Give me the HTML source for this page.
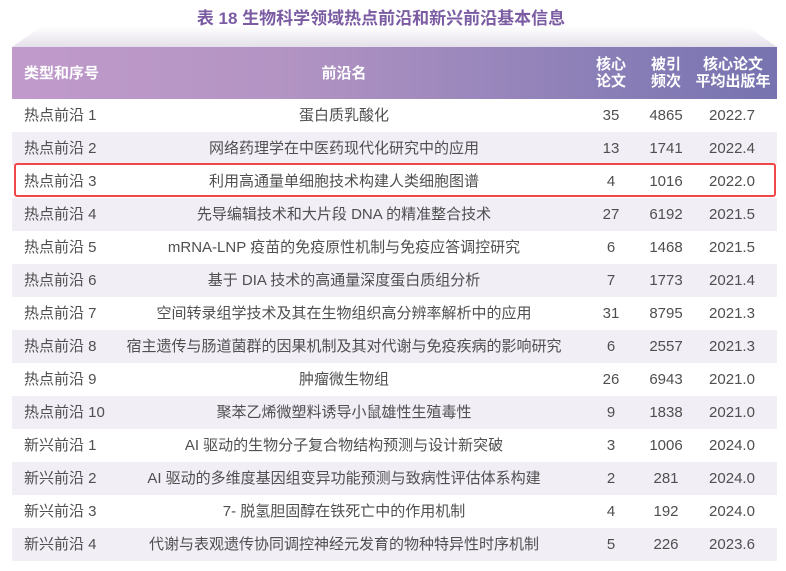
<!DOCTYPE html>
<html><head><meta charset="utf-8"><style>
*{margin:0;padding:0;box-sizing:border-box}
body{width:786px;height:571px;background:#fff;font-family:"Liberation Sans","Noto Sans CJK SC",sans-serif;position:relative;overflow:hidden;color:#4f4f4f}
.title{position:absolute;top:4px;left:-12px;width:786px;text-align:center;font-size:17px;font-weight:bold;color:#7b5ca3}
.shade{position:absolute;top:26px;left:12px;width:765px;height:21px;background:linear-gradient(#fff,#e4e0ea);clip-path:polygon(30px 0,735px 0,765px 21px,0 21px)}
.hdr{position:absolute;top:47px;left:12px;width:765px;height:52px;background:linear-gradient(90deg,#c09acb,#b394c3 35%,#8d80b8 75%,#7673b0);color:#fff;font-weight:bold;font-size:15px}
.hdr div{position:absolute;top:0;height:52px;display:flex;align-items:center;justify-content:center;text-align:center;line-height:17px}
.row{position:absolute;left:12px;width:765px;height:33px;font-size:15px}
.row.g{background:#f1eef6}
.row div{position:absolute;top:0;height:33px;line-height:33px;text-align:center;white-space:nowrap}
.c1{left:0;width:95px;text-align:left!important;padding-left:12px}
.c2{left:82px;width:500px}
.c3{left:574px;width:50px}
.c4{left:629px;width:50px}
.c5{left:689px;width:62px}
.red{position:absolute;left:14px;top:163px;width:762px;height:34px;border:2.5px solid #f04848;border-radius:3px}
</style></head><body>
<div class="title">表 18 生物科学领域热点前沿和新兴前沿基本信息</div>
<div class="shade"></div>
<div class="hdr">
<div style="left:0;width:112px;justify-content:flex-start;padding-left:12px">类型和序号</div>
<div style="left:82px;width:500px">前沿名</div>
<div style="left:574px;width:50px">核心<br>论文</div>
<div style="left:629px;width:50px">被引<br>频次</div>
<div style="left:680px;width:82px">核心论文<br>平均出版年</div>
</div>
<div class="row" style="top:99px"><div class="c1">热点前沿 1</div><div class="c2">蛋白质乳酸化</div><div class="c3">35</div><div class="c4">4865</div><div class="c5">2022.7</div></div>
<div class="row g" style="top:132px"><div class="c1">热点前沿 2</div><div class="c2">网络药理学在中医药现代化研究中的应用</div><div class="c3">13</div><div class="c4">1741</div><div class="c5">2022.4</div></div>
<div class="row" style="top:165px"><div class="c1">热点前沿 3</div><div class="c2">利用高通量单细胞技术构建人类细胞图谱</div><div class="c3">4</div><div class="c4">1016</div><div class="c5">2022.0</div></div>
<div class="row g" style="top:198px"><div class="c1">热点前沿 4</div><div class="c2">先导编辑技术和大片段 DNA 的精准整合技术</div><div class="c3">27</div><div class="c4">6192</div><div class="c5">2021.5</div></div>
<div class="row" style="top:231px"><div class="c1">热点前沿 5</div><div class="c2">mRNA-LNP 疫苗的免疫原性机制与免疫应答调控研究</div><div class="c3">6</div><div class="c4">1468</div><div class="c5">2021.5</div></div>
<div class="row g" style="top:264px"><div class="c1">热点前沿 6</div><div class="c2">基于 DIA 技术的高通量深度蛋白质组分析</div><div class="c3">7</div><div class="c4">1773</div><div class="c5">2021.4</div></div>
<div class="row" style="top:297px"><div class="c1">热点前沿 7</div><div class="c2">空间转录组学技术及其在生物组织高分辨率解析中的应用</div><div class="c3">31</div><div class="c4">8795</div><div class="c5">2021.3</div></div>
<div class="row g" style="top:330px"><div class="c1">热点前沿 8</div><div class="c2">宿主遗传与肠道菌群的因果机制及其对代谢与免疫疾病的影响研究</div><div class="c3">6</div><div class="c4">2557</div><div class="c5">2021.3</div></div>
<div class="row" style="top:363px"><div class="c1">热点前沿 9</div><div class="c2">肿瘤微生物组</div><div class="c3">26</div><div class="c4">6943</div><div class="c5">2021.0</div></div>
<div class="row g" style="top:396px"><div class="c1">热点前沿 10</div><div class="c2">聚苯乙烯微塑料诱导小鼠雄性生殖毒性</div><div class="c3">9</div><div class="c4">1838</div><div class="c5">2021.0</div></div>
<div class="row" style="top:429px"><div class="c1">新兴前沿 1</div><div class="c2">AI 驱动的生物分子复合物结构预测与设计新突破</div><div class="c3">3</div><div class="c4">1006</div><div class="c5">2024.0</div></div>
<div class="row g" style="top:462px"><div class="c1">新兴前沿 2</div><div class="c2">AI 驱动的多维度基因组变异功能预测与致病性评估体系构建</div><div class="c3">2</div><div class="c4">281</div><div class="c5">2024.0</div></div>
<div class="row" style="top:495px"><div class="c1">新兴前沿 3</div><div class="c2">7- 脱氢胆固醇在铁死亡中的作用机制</div><div class="c3">4</div><div class="c4">192</div><div class="c5">2024.0</div></div>
<div class="row g" style="top:528px"><div class="c1">新兴前沿 4</div><div class="c2">代谢与表观遗传协同调控神经元发育的物种特异性时序机制</div><div class="c3">5</div><div class="c4">226</div><div class="c5">2023.6</div></div>
<div class="red"></div>
</body></html>
